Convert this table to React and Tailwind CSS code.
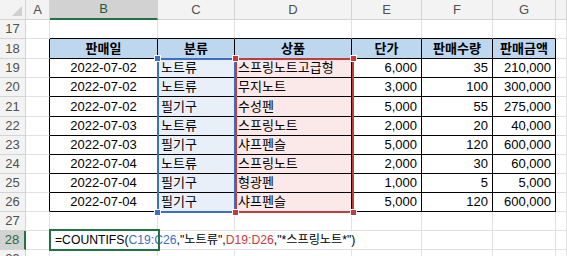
const COLS = ['A', 'B', 'C', 'D', 'E', 'F', 'G', ''];
const COL_W = ['w-[24px]', 'w-[108px]', 'w-[77px]', 'w-[117px]', 'w-[70px]', 'w-[71px]', 'w-[63px]', 'w-[11px]'];
const ROWS = [17, 18, 19, 20, 21, 22, 23, 24, 25, 26, 27, 28, 29];
const ROW_H = ['h-[19px]', 'h-[20px]', 'h-[19px]', 'h-[19px]', 'h-[20px]', 'h-[19px]', 'h-[19px]', 'h-[19px]', 'h-[19px]', 'h-[19px]', 'h-[19px]', 'h-[19px]', 'h-[19px]'];

const data = [
  ['2022-07-02', '노트류', '스프링노트고급형', '6,000', '35', '210,000'],
  ['2022-07-02', '노트류', '무지노트', '3,000', '100', '300,000'],
  ['2022-07-02', '필기구', '수성펜', '5,000', '55', '275,000'],
  ['2022-07-03', '노트류', '스프링노트', '2,000', '20', '40,000'],
  ['2022-07-03', '필기구', '샤프펜슬', '5,000', '120', '600,000'],
  ['2022-07-04', '노트류', '스프링노트', '2,000', '30', '60,000'],
  ['2022-07-04', '필기구', '형광펜', '1,000', '5', '5,000'],
  ['2022-07-04', '필기구', '샤프펜슬', '5,000', '120', '600,000'],
];
const heads = ['판매일', '분류', '상품', '단가', '판매수량', '판매금액'];

const inTable = (r, c) => r >= 18 && r <= 26 && c >= 1 && c <= 6;

function Cell({ r, c }) {
  const blackB = inTable(r, c) || inTable(r + 1, c);
  const blackR = inTable(r, c) || inTable(r, c + 1);
  const hideR = r === 28 && c >= 1 && c <= 3;
  let bg = '';
  let text = null;
  let align = 'justify-start pl-[3px]';
  let weight = '';
  if (r === 18 && c >= 1 && c <= 6) {
    bg = 'bg-[#bdd7ee]';
    text = heads[c - 1];
    align = 'justify-center';
    weight = 'font-bold';
  } else if (r >= 19 && r <= 26 && c >= 1 && c <= 6) {
    text = data[r - 19][c - 1];
    if (c === 1) align = 'justify-center';
    else if (c >= 4) align = 'justify-end pr-[4px]';
    if (c === 2) bg = 'bg-[#e9eff8]';
    if (c === 3) bg = 'bg-[#fbe9ea]';
  }
  return (
    <div
      className={[
        'shrink-0 flex items-center border-b',
        COL_W[c],
        blackB ? 'border-b-black' : 'border-b-[#e1e1e1]',
        hideR ? '' : 'border-r',
        blackR ? 'border-r-black' : 'border-r-[#e1e1e1]',
        bg,
        align,
        weight,
      ].join(' ')}
    >
      {r === 28 && c === 1 ? (
        <span className="whitespace-nowrap pl-[2px] text-[12.2px]">
          =COUNTIFS(<span className="text-[#3c6fc6]">C19:C26</span>,"노트류",<span className="text-[#c33b3f]">D19:D26</span>,"*스프링노트*")
        </span>
      ) : (
        text && <span className="whitespace-nowrap">{text}</span>
      )}
    </div>
  );
}

function Handle({ className }) {
  return <div className={'absolute w-[7px] h-[7px] border border-white ' + className} />;
}

export default function App() {
  return (
    <div
      className="relative w-[567px] h-[256px] overflow-hidden bg-white text-[13px] text-black"
      style={{ fontFamily: '"Liberation Sans", "Noto Sans CJK KR", sans-serif' }}
    >
      {/* column headers */}
      <div className="flex h-[20px]">
        <div className="relative shrink-0 w-[26px] bg-[#f3f3f3] border-r border-b border-[#d4d4d4]">
          <svg className="absolute right-[3px] bottom-[3px]" width="10" height="10" viewBox="0 0 10 10">
            <polygon points="10,0 10,10 0,10" fill="#d0d0d0" />
          </svg>
        </div>
        {COLS.map((col, i) => (
          <div
            key={i}
            className={[
              'shrink-0 flex items-center justify-center border-r border-[#d4d4d4] text-[13px]',
              COL_W[i],
              i === 1
                ? 'bg-[#d2d2d2] border-b-2 border-b-[#217346] text-[#1e5e3a]'
                : 'bg-[#f3f3f3] border-b text-[#505050]',
            ].join(' ')}
          >
            {col}
          </div>
        ))}
      </div>

      {/* rows */}
      {ROWS.map((r, ri) => (
        <div key={r} className={'flex ' + ROW_H[ri]}>
          <div
            className={[
              'shrink-0 w-[26px] flex items-center justify-center border-b border-[#d4d4d4] text-[13px]',
              r === 28
                ? 'bg-[#d2d2d2] border-r-2 border-r-[#217346] text-[#1e6e3f]'
                : 'bg-[#f3f3f3] border-r text-[#505050]',
            ].join(' ')}
          >
            {r}
          </div>
          {COLS.map((col, c) => (
            <Cell key={c} r={r} c={c} />
          ))}
        </div>
      ))}

      {/* range highlight for C19:C26 */}
      <div className="absolute left-[157px] top-[58px] w-[79px] h-[155px] border-2 border-[#3c6fc6]" />
      <Handle className="left-[154px] top-[55px] bg-[#3c6fc6]" />
      <Handle className="left-[154px] top-[209px] bg-[#3c6fc6]" />

      {/* range highlight for D19:D26 */}
      <div className="absolute left-[235px] top-[58px] w-[119px] h-[155px] border-2 border-[#c33b3f]" />
      <Handle className="left-[232px] top-[55px] bg-[#c33b3f]" />
      <Handle className="left-[350px] top-[55px] bg-[#c33b3f]" />
      <Handle className="left-[232px] top-[209px] bg-[#c33b3f]" />
      <Handle className="left-[350px] top-[209px] bg-[#c33b3f]" />

      {/* active cell B28 */}
      <div className="absolute left-[49px] top-[229px] w-[111px] h-[22px] border-2 border-[#217346]" />
    </div>
  );
}
